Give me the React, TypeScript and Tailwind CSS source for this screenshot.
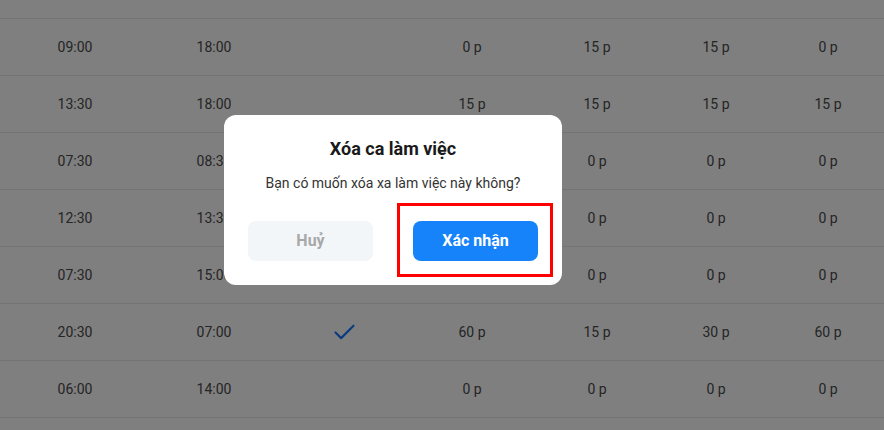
import React from "react";

const rows: string[][] = [
  ["09:00", "18:00", "", "0 p", "15 p", "15 p", "0 p"],
  ["13:30", "18:00", "", "15 p", "15 p", "15 p", "15 p"],
  ["07:30", "08:30", "", "0 p", "0 p", "0 p", "0 p"],
  ["12:30", "13:30", "", "0 p", "0 p", "0 p", "0 p"],
  ["07:30", "15:00", "", "0 p", "0 p", "0 p", "0 p"],
  ["20:30", "07:00", "check", "60 p", "15 p", "30 p", "60 p"],
  ["06:00", "14:00", "", "0 p", "0 p", "0 p", "0 p"],
];

function Check() {
  return (
    <svg width="27" height="27" viewBox="0 0 24 24" fill="none" stroke="#1677ff" strokeWidth="1.9" strokeLinecap="round" strokeLinejoin="round">
      <path d="M20 6 9 17l-5-5" />
    </svg>
  );
}

export default function App() {
  return (
    <div className="relative w-[884px] h-[430px] overflow-hidden bg-white text-[14px] text-[#4a4a4a]" style={{ fontFamily: "Roboto, 'Noto Sans', sans-serif" }}>
      <div className="h-[19px] border-b border-[#e9e9e9]" />
      {rows.map((r, i) => (
        <div key={i} className="grid grid-cols-[150px_128px_132px_124px_126px_112px_112px] h-[57px] border-b border-[#e9e9e9] items-center">
          {r.map((c, j) => (
            <div key={j} className="flex justify-center items-center">
              {c === "check" ? <Check /> : c}
            </div>
          ))}
        </div>
      ))}
      <div className="absolute inset-0 bg-black/50" />
      <div className="absolute left-[224px] top-[115px] w-[338px] rounded-[12px] bg-white px-6 pt-5 pb-6 flex flex-col items-center">
        <div className="text-[18px] leading-7 font-bold text-[#1a1a1a]">Xóa ca làm việc</div>
        <div className="mt-[10px] text-[14px] leading-5 text-[#333]">Bạn có muốn xóa xa làm việc này không?</div>
        <div className="mt-7 flex w-full justify-between">
          <button className="w-[125px] h-10 rounded-[8px] bg-[#f3f6f9] text-[16px] font-bold text-[#a8a8a8]">Huỷ</button>
          <div className="relative">
            <button className="w-[125px] h-10 rounded-[8px] bg-[#1783fb] text-[16px] font-bold text-white">Xác nhận</button>
            <div className="absolute left-[-16px] right-[-15px] top-[-18px] bottom-[-16px] border-[3px] border-[#ff0000]" />
          </div>
        </div>
      </div>
    </div>
  );
}
